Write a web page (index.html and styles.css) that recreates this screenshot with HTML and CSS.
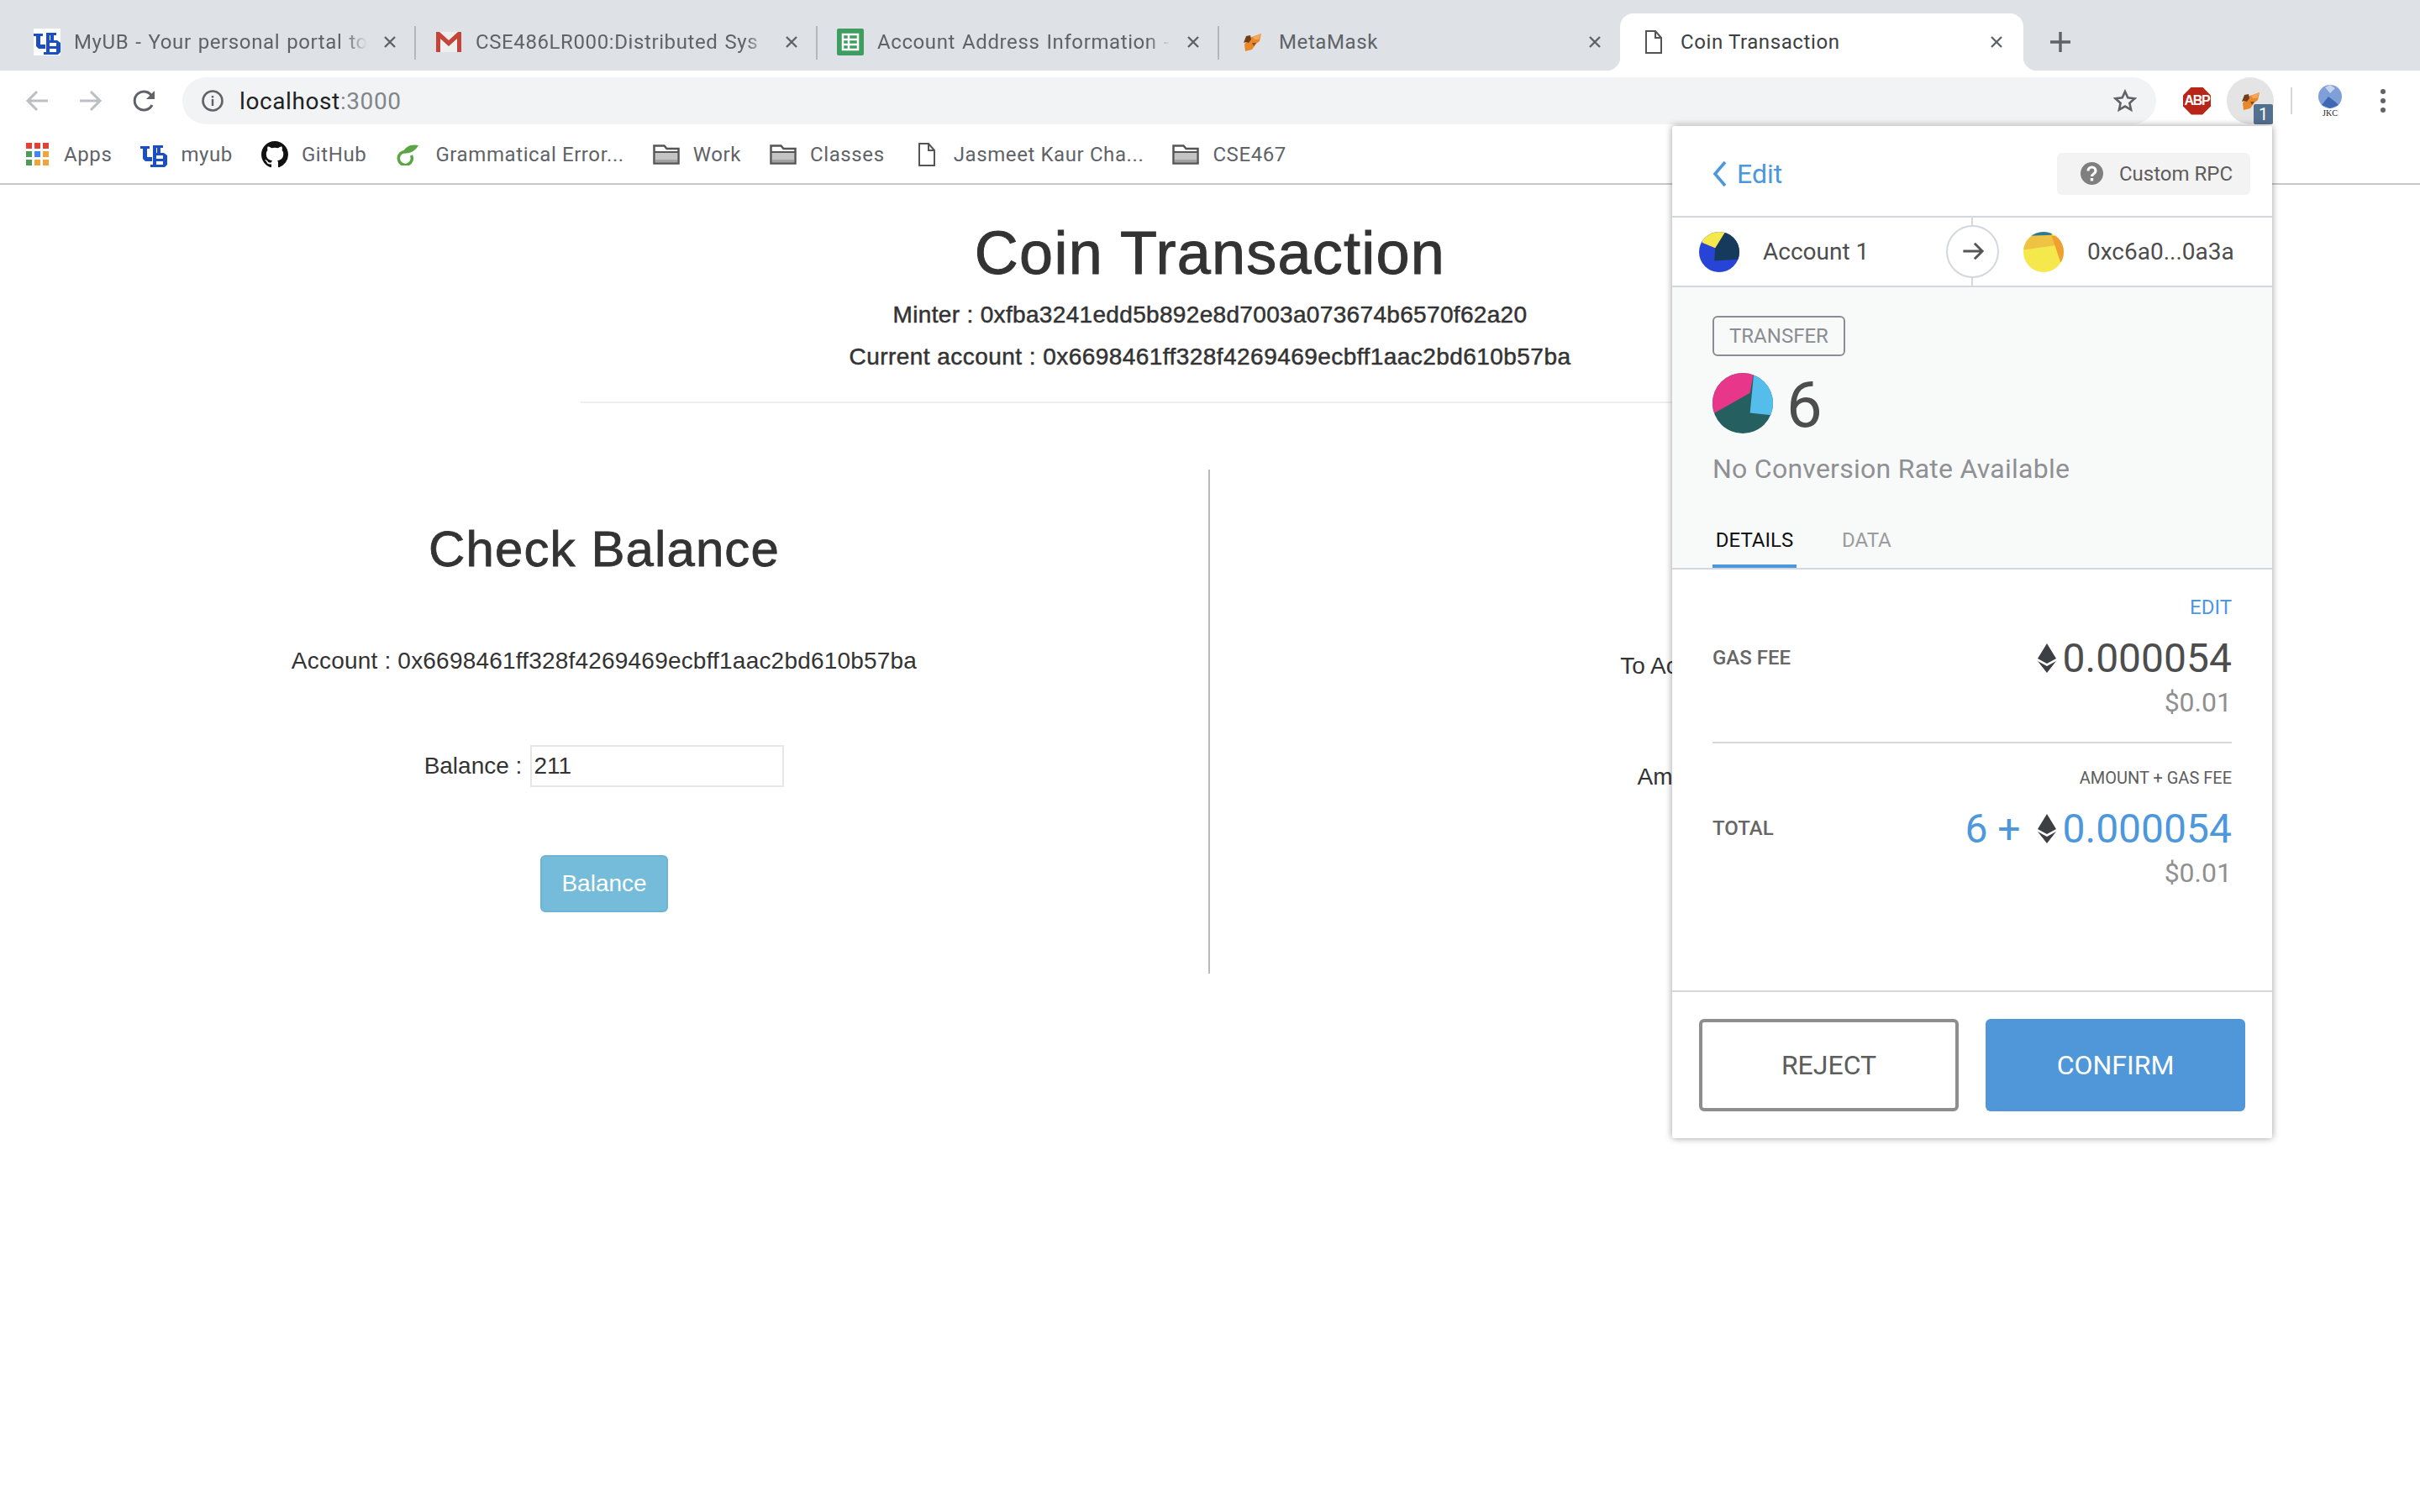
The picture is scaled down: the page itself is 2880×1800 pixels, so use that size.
FILE: index.html
```html
<!DOCTYPE html>
<html lang="en">
<head>
    <meta charset="UTF-8">
    <title>Coin Transaction</title>
    <link rel="stylesheet" href="styles.css">
</head>
<body>
    <svg class="defs" width="0" height="0">
        <symbol id="ub" viewBox="0 0 32 32">
            <path fill="#1c4fc0" d="M0 6h11v3H8v10h6v5H6l-3-3V9H0z"/>
            <path fill="#1c4fc0" fill-rule="evenodd" d="M15 5h12v3h-3v6h4l4 3v11l-3 3H12v-3h3zM19 8h1v6h-1zM19 17v4h8v-4zM19 24v4h8v-4z"/>
        </symbol>
        <symbol id="fox" viewBox="0 0 24 24">
            <polygon fill="#e8882a" points="9,7 23,2 21,11 17,14 12,21 4,23 3,15 6,10"/>
            <polygon fill="#6f3f1c" points="2,13 5,5 10,4 11,9 8,13 5,12"/>
            <polygon fill="#f3a65c" points="13,6 23,2 20,9 15,9"/>
            <polygon fill="#8a4f1e" points="12,13 17,13 14,17"/>
        </symbol>
        <symbol id="folder" viewBox="0 0 32 24">
            <path fill="#fff" stroke="#555" stroke-width="2.500" d="M1.500 1.500h12l3 3.500h14v17.500H1.500z"/>
            <rect x="3" y="10" width="26" height="11" fill="#c4c4c4"/>
            <rect x="3" y="18" width="26" height="3" fill="#a2a2a2"/>
            <rect x="2" y="8" width="28" height="2" fill="#555"/>
        </symbol>
        <symbol id="file" viewBox="0 0 20 28">
            <path fill="#fff" stroke="#555" stroke-width="2" d="M1 1h11l7 8v18H1zM12 1v8h7"/>
        </symbol>
        <symbol id="close" viewBox="0 0 14 14">
            <path stroke="#5f6368" stroke-width="2.400" d="M1 1l12 12M13 1L1 13"/>
        </symbol>
        <symbol id="eth" viewBox="0 0 22 35">
            <polygon fill="#3c3f43" points="11,0 22,18 11,24 0,18"/>
            <polygon fill="#3c3f43" points="0,21 11,27 22,21 11,35"/>
        </symbol>
    </svg>

    <div class="tabstrip">
        <div class="tab">
            <span class="favicon favicon-white"><svg width="32" height="32"><use href="#ub"/></svg></span>
            <span class="tab-title fade">MyUB - Your personal portal to</span>
            <svg class="tab-close" width="14" height="14"><use href="#close"/></svg>
        </div>
        <i class="tab-sep"></i>
        <div class="tab">
            <span class="favicon">
                <svg width="30" height="24" viewBox="0 0 30 24">
                    <rect width="30" height="24" fill="#eee"/>
                    <path fill="#c5443a" d="M0 0h4l11 10L26 0h4v24h-5V8L15 17 5 8v16H0z"/>
                </svg>
            </span>
            <span class="tab-title fade">CSE486LR000:Distributed Sys</span>
            <svg class="tab-close" width="14" height="14"><use href="#close"/></svg>
        </div>
        <i class="tab-sep"></i>
        <div class="tab">
            <span class="favicon">
                <svg width="32" height="32" viewBox="0 0 32 32">
                    <rect width="32" height="32" rx="2" fill="#3f9e5f"/>
                    <path fill="none" stroke="#fff" stroke-width="2.500" d="M7 7h18v18H7zM7 13h18M7 19h18M14 7v18"/>
                </svg>
            </span>
            <span class="tab-title fade">Account Address Information -</span>
            <svg class="tab-close" width="14" height="14"><use href="#close"/></svg>
        </div>
        <i class="tab-sep"></i>
        <div class="tab">
            <span class="favicon"><svg width="24" height="24"><use href="#fox"/></svg></span>
            <span class="tab-title">MetaMask</span>
            <svg class="tab-close" width="14" height="14"><use href="#close"/></svg>
        </div>
        <div class="tab tab-active">
            <span class="favicon"><svg width="20" height="28"><use href="#file"/></svg></span>
            <span class="tab-title">Coin Transaction</span>
            <svg class="tab-close" width="14" height="14"><use href="#close"/></svg>
        </div>
        <svg class="new-tab" width="26" height="26" viewBox="0 0 26 26">
            <path stroke="#5f6368" stroke-width="3.400" d="M13 1v24M1 13h24"/>
        </svg>
    </div>

    <div class="toolbar">
        <div class="nav-buttons">
            <svg width="28" height="26" viewBox="0 0 28 26"><path fill="none" stroke="#bcbec1" stroke-width="3" d="M27 13H3M14 2L3 13l11 11"/></svg>
            <svg width="28" height="26" viewBox="0 0 28 26"><path fill="none" stroke="#bcbec1" stroke-width="3" d="M1 13h24M14 2l11 11-11 11"/></svg>
            <svg width="28" height="28" viewBox="0 0 28 28"><path fill="none" stroke="#5f6368" stroke-width="3" d="M23 19a11 11 0 1 1 0-10"/><path fill="#5f6368" d="M26 2v10H16z"/></svg>
        </div>
        <div class="omnibox">
            <svg width="26" height="26" viewBox="0 0 26 26"><circle cx="13" cy="13" r="11.500" fill="none" stroke="#5f6368" stroke-width="2.600"/><rect x="11.800" y="11" width="2.400" height="8" fill="#5f6368"/><rect x="11.800" y="7" width="2.400" height="2.400" fill="#5f6368"/></svg>
            <span class="url">localhost<span class="url-port">:3000</span></span>
            <svg class="star" width="28" height="28" viewBox="0 0 28 28"><polygon fill="none" stroke="#5f6368" stroke-width="2.600" points="14,3 17.300,10.400 25.400,11.300 19.400,16.700 21.100,24.700 14,20.600 6.900,24.700 8.600,16.700 2.600,11.300 10.700,10.400"/></svg>
        </div>
        <div class="extensions">
            <div class="abp"><span>ABP</span></div>
            <div class="ext-mm">
                <svg width="24" height="24"><use href="#fox"/></svg>
                <span class="ext-badge">1</span>
            </div>
            <i class="ext-sep"></i>
            <div class="jkc">
                <svg width="28" height="28" viewBox="0 0 28 28">
                    <circle cx="14" cy="14" r="14" fill="#7e9fd8"/>
                    <polygon fill="#3f68b3" points="4,24 12,14 20,20 24,24 14,28"/>
                    <polygon fill="#c6d4ee" points="8,3 14,0 20,4 14,10"/>
                </svg>
                <span class="jkc-label">JKC</span>
            </div>
            <div class="menu-dots"><i></i><i></i><i></i></div>
        </div>
    </div>

    <div class="bookmarks">
        <div class="bm">
            <span class="bm-icon apps-grid">
                <i class="c-red"></i><i class="c-red"></i><i class="c-red"></i>
                <i class="c-green"></i><i class="c-blue"></i><i class="c-orange"></i>
                <i class="c-green"></i><i class="c-orange"></i><i class="c-orange"></i>
            </span>
            Apps
        </div>
        <div class="bm"><span class="bm-icon"><svg width="32" height="32"><use href="#ub"/></svg></span>myub</div>
        <div class="bm">
            <span class="bm-icon">
                <svg width="32" height="32" viewBox="0 0 16 16"><path fill="#111" d="M8 0C3.580 0 0 3.580 0 8c0 3.540 2.290 6.530 5.470 7.590.4.070.55-.17.55-.38 0-.19-.01-.82-.01-1.490-2.010.37-2.530-.49-2.690-.94-.09-.23-.48-.94-.82-1.130-.28-.15-.68-.52-.01-.53.63-.01 1.080.58 1.230.82.72 1.210 1.870.87 2.330.66.07-.52.28-.87.51-1.070-1.780-.2-3.640-.89-3.640-3.950 0-.87.31-1.590.82-2.150-.08-.2-.36-1.020.08-2.120 0 0 .67-.21 2.200.82.64-.18 1.320-.27 2-.27.68 0 1.360.09 2 .27 1.530-1.040 2.200-.82 2.200-.82.44 1.100.16 1.920.08 2.120.51.56.82 1.270.82 2.150 0 3.070-1.870 3.750-3.650 3.950.29.25.54.73.54 1.480 0 1.070-.01 1.930-.01 2.200 0 .21.15.46.55.38A8.013 8.013 0 0016 8c0-4.420-3.580-8-8-8z"/></svg>
            </span>
            GitHub
        </div>
        <div class="bm">
            <span class="bm-icon">
                <svg width="28" height="26" viewBox="0 0 28 26"><path fill="none" stroke="#5aa545" stroke-width="3.500" d="M11 9.500A8 8 0 1 0 17.500 14"/><path fill="#5aa545" d="M7 11C10 3 18 0 26 2 22 9 15 13 7 11z"/></svg>
            </span>
            Grammatical Error...
        </div>
        <div class="bm"><span class="bm-icon"><svg width="32" height="24"><use href="#folder"/></svg></span>Work</div>
        <div class="bm"><span class="bm-icon"><svg width="32" height="24"><use href="#folder"/></svg></span>Classes</div>
        <div class="bm"><span class="bm-icon"><svg width="20" height="28"><use href="#file"/></svg></span>Jasmeet Kaur Cha...</div>
        <div class="bm"><span class="bm-icon"><svg width="32" height="24"><use href="#folder"/></svg></span>CSE467</div>
    </div>

    <div class="app">
        <h1>Coin Transaction</h1>
        <h5>Minter : 0xfba3241edd5b892e8d7003a073674b6570f62a20</h5>
        <h5 class="h5-wide">Current account : 0x6698461ff328f4269469ecbff1aac2bd610b57ba</h5>
        <hr class="app-rule">
        <div class="columns">
            <div class="col col-left">
                <h2>Check Balance</h2>
                <p class="account-line">Account : 0x6698461ff328f4269469ecbff1aac2bd610b57ba</p>
                <div class="field">
                    <label>Balance :</label>
                    <input class="field-input" type="text" value="211">
                </div>
                <button class="btn-balance">Balance</button>
            </div>
            <div class="col col-right">
                <div class="field">
                    <label>To Account :</label>
                    <input class="field-input" type="text">
                </div>
                <div class="field">
                    <label>Amount :</label>
                    <input class="field-input" type="text">
                </div>
            </div>
        </div>
    </div>

    <div class="popup">
        <div class="popup-head">
            <div class="back">
                <svg width="17" height="32" viewBox="0 0 17 32"><path fill="none" stroke="#4d97dd" stroke-width="3.600" d="M15 2L3 16l12 14"/></svg>
                Edit
            </div>
            <div class="network">
                <svg width="27" height="27" viewBox="0 0 27 27"><circle cx="13.500" cy="13.500" r="13.500" fill="#7f7f7f"/><path fill="none" stroke="#fff" stroke-width="3.200" d="M9 10.500c0-6 9-6 9 0 0 3.500-4.500 3.500-4.500 6.500"/><rect x="11.800" y="19" width="3.400" height="3.400" fill="#fff"/></svg>
                Custom RPC
            </div>
        </div>

        <div class="parties">
            <div class="party party-from">
                <svg class="avatar" width="48" height="48" viewBox="0 0 100 100">
                    <clipPath id="clip-a"><circle cx="50" cy="50" r="50"/></clipPath>
                    <g clip-path="url(#clip-a)">
                        <rect width="100" height="100" fill="#2744d6"/>
                        <polygon fill="#163a5c" points="38,72 100,68 100,0 65,0 40,40"/>
                        <polygon fill="#f5e84a" points="8,27 40,40 65,0 8,0"/>
                    </g>
                </svg>
                <span>Account 1</span>
            </div>
            <div class="party-arrow">
                <svg width="30" height="26" viewBox="0 0 30 26"><path fill="none" stroke="#555" stroke-width="3.400" d="M0 13h27M16 2l11 11-11 11"/></svg>
            </div>
            <div class="party party-to">
                <svg class="avatar" width="48" height="48" viewBox="0 0 100 100">
                    <clipPath id="clip-b"><circle cx="50" cy="50" r="50"/></clipPath>
                    <g clip-path="url(#clip-b)">
                        <rect width="100" height="100" fill="#f5e84c"/>
                        <polygon fill="#eec243" points="0,45 85,33 70,5 0,5"/>
                        <polygon fill="#2a7a96" points="15,10 70,8 70,0 15,0"/>
                        <polygon fill="#f0a030" points="70,10 100,10 100,75 92,75"/>
                    </g>
                </svg>
                <span>0xc6a0...0a3a</span>
            </div>
        </div>

        <div class="summary">
            <span class="tx-type">TRANSFER</span>
            <div class="tx-amount">
                <svg width="72" height="72" viewBox="0 0 100 100">
                    <clipPath id="clip-c"><circle cx="50" cy="50" r="50"/></clipPath>
                    <g clip-path="url(#clip-c)">
                        <rect width="100" height="100" fill="#265f5f"/>
                        <polygon fill="#e8378b" points="0,68 62,33 68,0 0,0"/>
                        <polygon fill="#55bdec" points="68,4 62,66 100,70 100,0"/>
                    </g>
                </svg>
                <span>6</span>
            </div>
            <div class="tx-rate">No Conversion Rate Available</div>
            <div class="tx-tabs">
                <span class="tx-tab tx-tab-on">DETAILS</span>
                <span class="tx-tab">DATA</span>
            </div>
        </div>

        <div class="details">
            <div class="detail-note detail-edit">EDIT</div>
            <div class="detail-row">
                <span class="detail-label">GAS FEE</span>
                <span class="detail-value"><svg width="22" height="35"><use href="#eth"/></svg>0.000054</span>
            </div>
            <div class="detail-fiat">$0.01</div>
            <hr class="detail-rule">
            <div class="detail-note">AMOUNT + GAS FEE</div>
            <div class="detail-row">
                <span class="detail-label">TOTAL</span>
                <span class="detail-value detail-blue">6 + <svg width="22" height="35"><use href="#eth"/></svg>0.000054</span>
            </div>
            <div class="detail-fiat">$0.01</div>
        </div>

        <div class="popup-foot">
            <button class="btn-reject">REJECT</button>
            <button class="btn-confirm">CONFIRM</button>
        </div>
    </div>
</body>
</html>
```

FILE: styles.css
```css
* {
    box-sizing: border-box;
}
html, body {
    margin: 0;
    height: 100%;
}
body {
    position: relative;
    overflow: hidden;
    background-color: #fff;
    font-family: "Liberation Sans", Arial, sans-serif;
    color: #333;
}
.defs {
    display: block;
    height: 0;
}

/* browser chrome */
.tabstrip {
    display: flex;
    align-items: flex-end;
    height: 84px;
    padding-left: 17px;
    background-color: #dee1e6;
    font-family: Roboto, sans-serif;
}
.tab {
    display: flex;
    align-items: center;
    width: 476px;
    height: 68px;
    padding: 0 15px 0 23px;
    font-size: 24px;
    letter-spacing: 0.6px;
    color: #5f6368;
}
.tab-active {
    position: relative;
    width: 480px;
    margin-left: 1px;
    padding-left: 24px;
    background-color: #fff;
    border-radius: 16px 16px 0 0;
    color: #3c4043;
}
.tab-active::before,
.tab-active::after {
    content: "";
    position: absolute;
    bottom: 0;
    width: 16px;
    height: 16px;
}
.tab-active::before {
    left: -16px;
    background: radial-gradient(circle at 0 0, #dee1e6 16px, #fff 16.5px);
}
.tab-active::after {
    right: -16px;
    background: radial-gradient(circle at 100% 0, #dee1e6 16px, #fff 16.5px);
}
.tab-sep {
    width: 2px;
    height: 40px;
    margin-bottom: 13px;
    background-color: #b4b7bc;
}
.favicon {
    display: flex;
    align-items: center;
    justify-content: center;
    flex: none;
    width: 32px;
    height: 32px;
    margin-right: 16px;
}
.favicon-white {
    background-color: #fff;
}
.tab-title {
    flex: none;
    width: 349px;
    margin-right: 20px;
    overflow: hidden;
    white-space: nowrap;
}
.fade {
    word-spacing: 1.5px;
    -webkit-mask-image: linear-gradient(to right, #000 92%, transparent 100%);
    mask-image: linear-gradient(to right, #000 92%, transparent 100%);
}
.tab-close {
    flex: none;
}
.new-tab {
    margin: 0 0 21px 31px;
}
.toolbar {
    display: flex;
    align-items: center;
    height: 72px;
    background-color: #fff;
}
.nav-buttons {
    display: flex;
    align-items: center;
    gap: 36px;
    width: 217px;
    padding-left: 30px;
}
.omnibox {
    display: flex;
    align-items: center;
    width: 2349px;
    height: 56px;
    padding: 0 16px 0 23px;
    border-radius: 28px;
    background-color: #f1f3f4;
    font-family: Roboto, sans-serif;
}
.url {
    margin-left: 19px;
    font-size: 28px;
    letter-spacing: 0.6px;
    color: #202124;
}
.url-port {
    color: #80868b;
}
.star {
    margin-left: auto;
    margin-right: 7px;
}
.extensions {
    display: flex;
    align-items: center;
}
.abp {
    display: flex;
    align-items: center;
    justify-content: center;
    width: 33px;
    height: 33px;
    margin-left: 32px;
    background-color: #b92518;
    clip-path: polygon(30% 0, 70% 0, 100% 30%, 100% 70%, 70% 100%, 30% 100%, 0 70%, 0 30%);
    font-size: 16px;
    font-weight: bold;
    letter-spacing: -1.2px;
    color: #fff;
}
.ext-mm {
    position: relative;
    display: flex;
    align-items: center;
    justify-content: center;
    width: 56px;
    height: 56px;
    margin-left: 19px;
    border-radius: 50%;
    background-color: #e4e4e4;
}
.ext-badge {
    position: absolute;
    right: 1px;
    bottom: 0;
    width: 23px;
    height: 24px;
    border-radius: 2px;
    background-color: #54708f;
    font-family: Roboto, sans-serif;
    font-size: 20px;
    line-height: 24px;
    text-align: center;
    color: #fff;
}
.ext-sep {
    width: 2px;
    height: 32px;
    margin-left: 20px;
    background-color: #d4d6d9;
}
.jkc {
    display: flex;
    flex-direction: column;
    align-items: center;
    width: 28px;
    margin-left: 31px;
}
.jkc-label {
    font-family: "Liberation Serif", serif;
    font-size: 10px;
    line-height: 11px;
    color: #222;
}
.menu-dots {
    display: flex;
    flex-direction: column;
    gap: 5px;
    margin-left: 46px;
}
.menu-dots i {
    width: 6px;
    height: 6px;
    border-radius: 50%;
    background-color: #5f6368;
}
.bookmarks {
    display: flex;
    align-items: center;
    gap: 34px;
    height: 64px;
    padding: 0 0 7px 28px;
    border-bottom: 2px solid #c8c8c8;
    font-family: Roboto, sans-serif;
    font-size: 24px;
    letter-spacing: 0.6px;
    color: #5f6368;
}
.bm {
    display: flex;
    align-items: center;
    gap: 16px;
    white-space: nowrap;
}
.bm-icon {
    display: flex;
    align-items: center;
    justify-content: center;
    width: 32px;
    height: 32px;
}
.apps-grid {
    display: grid;
    grid-template-columns: repeat(3, 7px);
    grid-auto-rows: 7px;
    gap: 3px;
    align-items: stretch;
    justify-content: center;
    align-content: center;
}
.c-red { background-color: #e34133; }
.c-green { background-color: #4d9a5b; }
.c-blue { background-color: #4285f4; }
.c-orange { background-color: #eea63a; }

/* page */
.app {
    text-align: center;
}
h1 {
    margin: 41px 0 9px;
    font-size: 72px;
    font-weight: normal;
    line-height: 80px;
    letter-spacing: 1.25px;
    -webkit-text-stroke: 1px #333;
}
h5 {
    margin: 0;
    font-size: 28px;
    font-weight: normal;
    line-height: 50px;
    letter-spacing: 0.33px;
    -webkit-text-stroke: 0.5px #333;
}
.h5-wide {
    letter-spacing: 0.45px;
}
.app-rule {
    width: 1498px;
    margin: 28px auto 79px;
    border: 0;
    border-top: 2px solid #eee;
}
.columns {
    display: flex;
    height: 600px;
}
.col {
    display: flex;
    flex-direction: column;
    align-items: center;
    width: 1438px;
}
.col-left {
    padding-top: 62px;
    border-right: 2px solid #b9b9b9;
    width: 1440px;
}
.col-right {
    gap: 82px;
    padding-top: 209px;
    padding-left: 3px;
}
h2 {
    margin: 0 0 80px;
    font-size: 60px;
    font-weight: normal;
    line-height: 66px;
    letter-spacing: 1.1px;
    -webkit-text-stroke: 0.8px #333;
}
.account-line {
    margin: 0 0 80px;
    font-size: 28px;
    line-height: 40px;
    letter-spacing: 0.2px;
}
.field {
    display: flex;
    align-items: center;
    gap: 10px;
    font-size: 28px;
}
.field-input {
    width: 302px;
    height: 50px;
    padding: 0 2px;
    border: 2px solid #e6e6e6;
    font-family: "Liberation Sans", Arial, sans-serif;
    font-size: 28px;
    color: #333;
}
.btn-balance {
    width: 152px;
    height: 68px;
    margin-top: 81px;
    border: 2px solid #6bb5d3;
    border-radius: 6px;
    background-color: #74bcd9;
    font-family: "Liberation Sans", Arial, sans-serif;
    font-size: 28px;
    color: #fff;
}

/* metamask popup */
.popup {
    position: absolute;
    top: 150px;
    left: 1990px;
    display: flex;
    flex-direction: column;
    width: 714px;
    height: 1205px;
    border-radius: 2px;
    background-color: #fff;
    box-shadow: 0 0 8px rgba(0, 0, 0, 0.4);
    font-family: Roboto, sans-serif;
}
.popup-head {
    display: flex;
    align-items: center;
    justify-content: space-between;
    height: 107px;
    padding: 6px 26px 0 48px;
}
.back {
    display: flex;
    align-items: center;
    gap: 12px;
    font-size: 32px;
    color: #4d97dd;
}
.network {
    display: flex;
    align-items: center;
    gap: 19px;
    width: 230px;
    height: 50px;
    padding-left: 28px;
    border-radius: 6px;
    background-color: #f3f3f3;
    font-size: 24px;
    color: #5d5d5d;
}
.parties {
    position: relative;
    display: flex;
    align-items: center;
    height: 85px;
    border-top: 2px solid #d2d8dd;
    border-bottom: 2px solid #d2d8dd;
    font-size: 28px;
    color: #4d4d4d;
}
.party {
    display: flex;
    align-items: center;
    gap: 28px;
}
.party-from {
    width: 418px;
    padding-left: 32px;
}
.party-arrow {
    position: absolute;
    top: -2px;
    bottom: -2px;
    left: 326px;
    display: flex;
    align-items: center;
    justify-content: center;
    width: 63px;
}
.party-arrow::before {
    content: "";
    position: absolute;
    top: 0;
    bottom: 0;
    left: 30px;
    width: 2px;
    background-color: #d2d8dd;
}
.party-arrow svg {
    position: relative;
    box-sizing: content-box;
    width: 26px;
    height: 22px;
    padding: 18px 15px 19px 18px;
    border: 2px solid #d2d8dd;
    border-radius: 50%;
    background-color: #fff;
}
.summary {
    flex: none;
    height: 334px;
    padding: 34px 0 0 48px;
    background-color: #f8f9f9;
}
.tx-type {
    display: inline-block;
    height: 48px;
    padding: 0 18px;
    border: 2px solid #8a8d91;
    border-radius: 6px;
    font-size: 24px;
    line-height: 44px;
    color: #8a8d91;
}
.tx-amount {
    display: flex;
    align-items: center;
    gap: 16px;
    margin-top: 18px;
    font-size: 76px;
    line-height: 72px;
    color: #4d4d4d;
}
.tx-amount span {
    padding-top: 4px;
}
.tx-rate {
    margin-top: 21px;
    font-size: 32px;
    line-height: 38px;
    letter-spacing: 0.26px;
    color: #8f9094;
}
.tx-tabs {
    display: flex;
    gap: 54px;
    margin-top: 46px;
    font-size: 24px;
}
.tx-tab {
    height: 53px;
    color: #9a9ca0;
    line-height: 40px;
}
.tx-tab-on {
    width: 100px;
    border-bottom: 4px solid #4d97dd;
    text-align: center;
    color: #111;
}
.details {
    flex: 1;
    padding: 31px 48px 0;
    border-top: 2px solid #d2d8dd;
    text-align: right;
}
.detail-note {
    font-size: 20px;
    line-height: 28px;
    color: #5d5d5d;
}
.detail-edit {
    font-size: 24px;
    color: #4d97dd;
}
.detail-row {
    display: flex;
    align-items: center;
    justify-content: space-between;
    height: 60px;
    margin-top: 16px;
}
.detail-label {
    font-size: 24px;
    font-weight: 500;
    color: #666;
}
.detail-value {
    display: flex;
    align-items: center;
    gap: 8px;
    font-size: 48px;
    color: #4d4d4d;
    white-space: pre;
}
.detail-blue {
    color: #4d97dd;
}
.detail-fiat {
    margin-top: 3px;
    font-size: 32px;
    line-height: 40px;
    color: #909090;
}
.detail-rule {
    margin: 27px 0 27px;
    border: 0;
    border-top: 2px solid #d2d8dd;
}
.popup-foot {
    display: flex;
    justify-content: space-between;
    height: 176px;
    padding: 32px 32px 0;
    border-top: 2px solid #d2d8dd;
}
.popup-foot button {
    width: 309px;
    height: 110px;
    border-radius: 6px;
    font-family: Roboto, sans-serif;
    font-size: 32px;
}
.btn-reject {
    border: 4px solid #8e8e8e;
    background-color: #fff;
    color: #5d5d5d;
}
.btn-confirm {
    border: none;
    background-color: #4f97d9;
    color: #fff;
}
```
